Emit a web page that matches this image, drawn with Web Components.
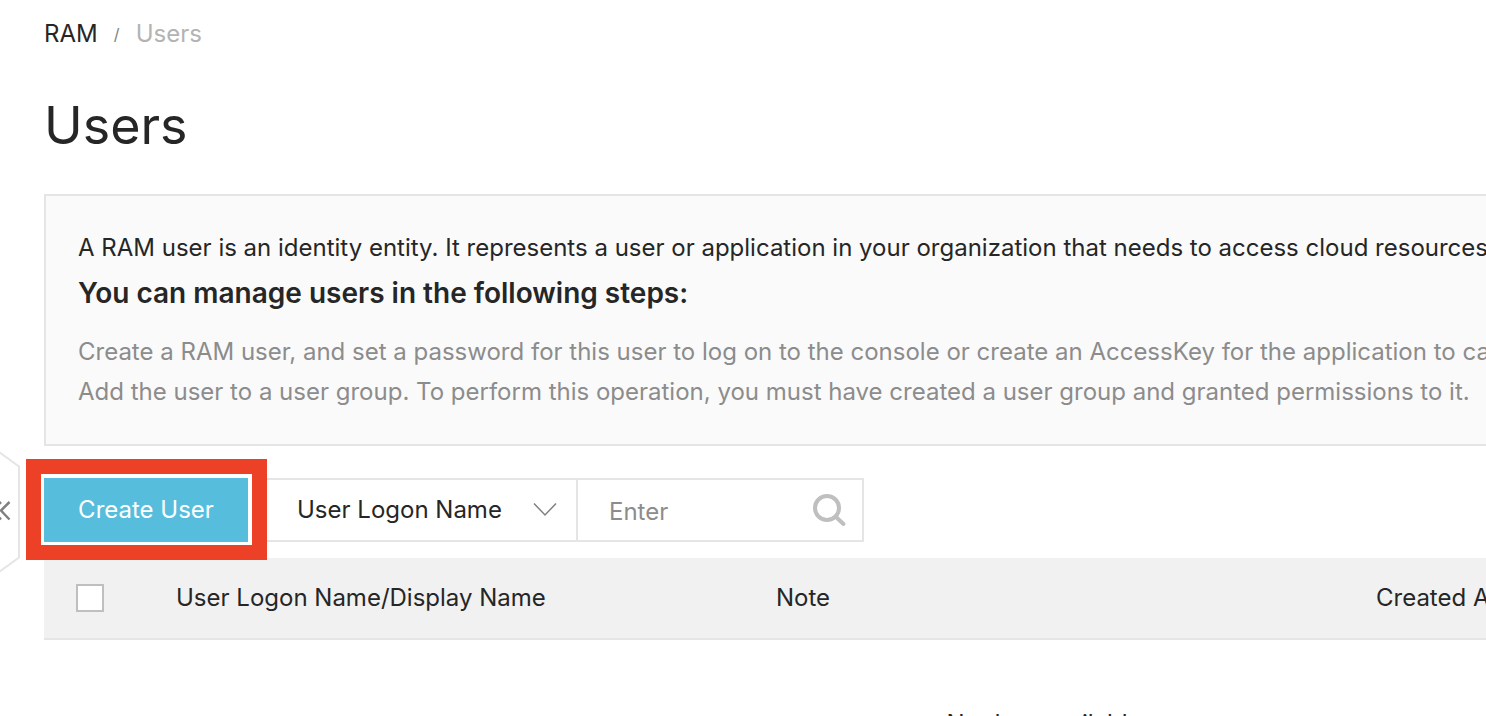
<!DOCTYPE html>
<html lang="en">
<head>
<meta charset="utf-8">
<title>RAM - Users</title>
<style>
  html, body { margin: 0; background: #fff; }
  body {
    min-height: 100vh;
    overflow: hidden;
    font: 400 24px/40px Inter, "Liberation Sans", sans-serif;
    color: #262626;
  }
</style>
</head>
<body>
<ram-page>
  <ram-breadcrumb></ram-breadcrumb>
  <ram-title>Users</ram-title>
  <ram-notice>
    <span slot="summary">A RAM user is an identity entity. It represents a user or application in your organization that needs to access cloud resources.</span>
    <span slot="heading">You can manage users in the following steps:</span>
    <div slot="step">Create a RAM user, and set a password for this user to log on to the console or create an AccessKey for the application to call APIs.</div>
    <div slot="step">Add the user to a user group. To perform this operation, you must have created a user group and granted permissions to it.</div>
  </ram-notice>
  <ram-toolbar></ram-toolbar>
  <ram-table></ram-table>
</ram-page>

<script>
const define = (name, html) => customElements.define(name, class extends HTMLElement {
  constructor() {
    super();
    this.attachShadow({ mode: 'open' }).innerHTML = html;
  }
});

define('ram-page', `
  <style>
    :host { display: block; position: relative; }
    main { padding: 14px 44px 0; min-width: 2000px; }
    ram-collapse { position: absolute; left: 0; top: 450px; }
  </style>
  <main><slot></slot></main>
  <ram-collapse></ram-collapse>
`);

define('ram-collapse', `
  <style>
    :host { display: block; width: 20px; height: 124px; }
    button { display: block; padding: 0; border: 0; background: none; width: 20px; height: 124px; }
    svg { display: block; }
  </style>
  <button type="button" aria-label="Collapse sidebar">
    <svg width="20" height="124" viewBox="0 0 20 124" fill="none">
      <path d="M-1 2 19 16.500V107.500L-1 122" stroke="#e5e5e5" stroke-width="2"/>
      <path d="M9.500 52 1 60.500 9.500 69.500M1 52-7.500 60.500 1 69.500" stroke="#808080" stroke-width="2.500"/>
    </svg>
  </button>
`);

define('ram-breadcrumb', `
  <style>
    :host { display: block; }
    nav { display: flex; align-items: center; height: 40px; }
    a { color: #262626; text-decoration: none; }
    i { font-size: 16px; font-style: normal; color: #808080; width: 38px; text-align: center; }
    span { color: #b3b3b3; }
  </style>
  <nav aria-label="Breadcrumb"><a href="#">RAM</a><i>/</i><span aria-current="page">Users</span></nav>
`);

define('ram-title', `
  <style>
    :host { display: block; padding: 38px 0 34px; }
    h1 { margin: 0; font-size: 52px; line-height: 68px; font-weight: 400; }
  </style>
  <h1><slot></slot></h1>
`);

define('ram-notice', `
  <style>
    :host { display: block; border: 2px solid #e5e5e5; background: #fafafa; padding: 32px; }
    p, h2 { margin: 0; }
    h2 { font-size: 28px; line-height: 50px; font-weight: 600; margin-bottom: 14px; }
    div { color: #8c8c8c; }
  </style>
  <p><slot name="summary"></slot></p>
  <h2><slot name="heading"></slot></h2>
  <div><slot name="step"></slot></div>
`);

define('ram-toolbar', `
  <style>
    :host { display: flex; gap: 16px; padding: 32px 0 16px; }
    .create { position: relative; z-index: 1; }
    button, select, input { font: inherit; margin: 0; border-radius: 0; box-sizing: border-box; height: 64px; }
    .create button { display: block; width: 204px; border: 0; padding: 0; background: #56bedc; color: #fff; }
    .mark { position: absolute; inset: -19px -19px -18px -18px; border: 15px solid #ec4126; pointer-events: none; }
    .search { display: flex; }
    .pick, .find { display: flex; position: relative; }
    select { appearance: none; width: 314px; padding: 0 72px 0 31px; border: 2px solid #e5e5e5; background: #fff; color: #262626; }
    .find { width: 286px; }
    input { width: 100%; padding: 2px 64px 0 31px; border: 2px solid #e5e5e5; border-left: 0; background: #fff; }
    input::placeholder { color: #8c8c8c; opacity: 1; }
    .pick svg { position: absolute; right: 20px; top: 24px; pointer-events: none; }
    .find button { position: absolute; right: 16px; top: 14px; width: 36px; height: 36px; padding: 0; border: 0; background: none; }
    .find svg { display: block; }
  </style>
  <div class="create"><button type="button">Create User</button><div class="mark"></div></div>
  <div class="search">
    <div class="pick">
      <select aria-label="Search by"><option>User Logon Name</option></select>
      <svg width="26" height="16" viewBox="0 0 26 16" fill="none"><path d="M2 1.500 13 13 24 1.500" stroke="#808080" stroke-width="1.500"/></svg>
    </div>
    <div class="find">
      <input type="text" placeholder="Enter" aria-label="User logon name">
      <button type="button" aria-label="Search">
        <svg width="36" height="36" viewBox="0 0 36 36" fill="none" stroke="#bfbfbf">
          <circle cx="15" cy="16" r="12" stroke-width="4"/><path d="M24 25 31.500 32" stroke-width="4" stroke-linecap="round"/>
        </svg>
      </button>
    </div>
  </div>
`);

define('ram-table', `
  <style>
    :host { display: block; }
    table { width: 100%; table-layout: fixed; border-collapse: separate; border-spacing: 0; }
    th { height: 80px; padding: 0 32px; font-weight: 400; text-align: left; background: #f1f1f1; border-bottom: 2px solid #e5e5e5; }
    .check { width: 36px; }
    .wide { width: 536px; }
    input { appearance: none; display: block; box-sizing: border-box; width: 28px; height: 28px; margin: 0; border: 2px solid #bfbfbf; background: #fff; }
    td { padding: 64px 32px; text-align: center; }
  </style>
  <table>
    <thead><tr>
      <th class="check"><input type="checkbox" aria-label="Select all users"></th>
      <th class="wide">User Logon Name/Display Name</th>
      <th class="wide">Note</th>
      <th>Created At</th>
    </tr></thead>
    <tbody><tr><td colspan="4">No data available</td></tr></tbody>
  </table>
`);
</script>
</body>
</html>
